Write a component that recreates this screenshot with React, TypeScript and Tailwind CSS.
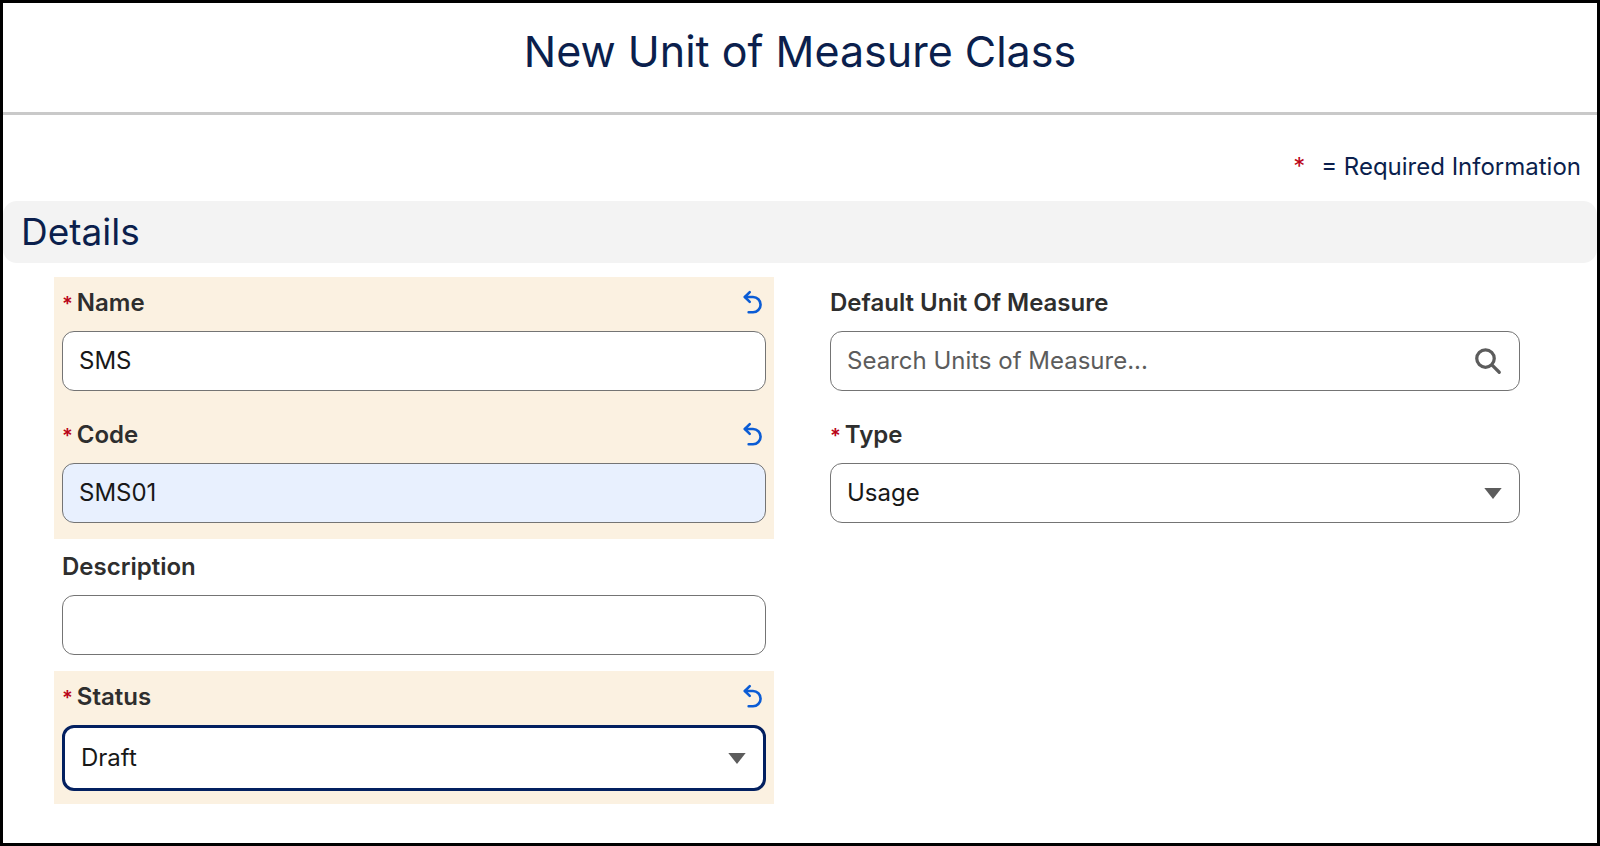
import React from 'react';

const font = { fontFamily: 'Inter, "Noto Sans", sans-serif' };

function UndoIcon() {
  return (
    <svg width="26" height="30" viewBox="0 0 24 26" fill="none" stroke="#0b5cd5" strokeWidth="2.4" strokeLinecap="round" strokeLinejoin="round">
      <path d="M9 3 L4.5 7.5 L9 12" />
      <path d="M4.5 7.5 H12 a7 7 0 0 1 0 14 H8" />
    </svg>
  );
}

function Caret() {
  return (
    <svg width="20" height="13" viewBox="0 0 18 12">
      <path d="M1 1 H17 L9 11 Z" fill="#5c5c5c" />
    </svg>
  );
}

function Label({ text, required, undo }: { text: string; required?: boolean; undo?: boolean }) {
  return (
    <div className="flex items-center justify-between h-[54px] pb-[2px] px-2">
      <div className="flex items-baseline text-[24px] font-semibold text-[#2e2e2e]">
        {required && <span className="text-[#ba0517] mr-1 text-[20px]">*</span>}
        {text}
      </div>
      {undo && <UndoIcon />}
    </div>
  );
}

function Box({ children, className = '' }: { children?: React.ReactNode; className?: string }) {
  return (
    <div className={`mx-2 h-[60px] rounded-[12px] flex items-center justify-between px-4 text-[24px] text-[#181818] ${className}`}>
      {children}
    </div>
  );
}

export default function App() {
  return (
    <div style={font} className="h-[846px] w-full bg-white border-[3px] border-black box-border flex flex-col overflow-hidden">
      <div className="h-[112px] flex items-center justify-center border-b-[3px] border-[#c9c9c9]">
        <h1 className="text-[43px] text-[#0b1f4d] -mt-3">New Unit of Measure Class</h1>
      </div>
      <div className="flex justify-end pr-[16px] pt-[34px] text-[24px] text-[#0b1f4d]">
        <span className="text-[#ba0517] mr-4">*</span>= Required Information
      </div>
      <div className="mt-[16px] h-[62px] bg-[#f3f3f3] rounded-[14px] flex items-center pl-[18px] text-[37px] text-[#0b1f4d]">
        Details
      </div>
      <div className="flex pl-[51px] pt-[14px] gap-[48px]">
        <div className="w-[720px] flex flex-col">
          <div className="bg-[#fbf1e1] pb-[16px]">
            <Label text="Name" required undo />
            <Box className="border-[1.5px] border-[#747474] bg-white">SMS</Box>
            <div className="h-[18px]" />
            <Label text="Code" required undo />
            <Box className="border-[1.5px] border-[#747474] bg-[#e8f0fe]">SMS01</Box>
          </div>
          <div className="pt-[2px] pb-[16px]">
            <Label text="Description" />
            <Box className="border-[1.5px] border-[#747474] bg-white" />
          </div>
          <div className="bg-[#fbf1e1] pb-[13px]">
            <Label text="Status" required undo />
            <Box className="border-[3.5px] border-[#032060] bg-white h-[66px]">
              Draft
              <Caret />
            </Box>
          </div>
        </div>
        <div className="w-[706px] flex flex-col">
          <Label text="Default Unit Of Measure" />
          <Box className="border-[1.5px] border-[#747474] bg-white">
            <span className="text-[#5c5c5c]">Search Units of Measure...</span>
            <svg width="30" height="30" viewBox="0 0 24 24" fill="none" stroke="#5c5c5c" strokeWidth="2.6" strokeLinecap="round">
              <circle cx="10" cy="10" r="7" />
              <path d="M15.5 15.5 L21 21" />
            </svg>
          </Box>
          <div className="h-[18px]" />
          <Label text="Type" required />
          <Box className="border-[1.5px] border-[#747474] bg-white">
            Usage
            <Caret />
          </Box>
        </div>
      </div>
    </div>
  );
}
